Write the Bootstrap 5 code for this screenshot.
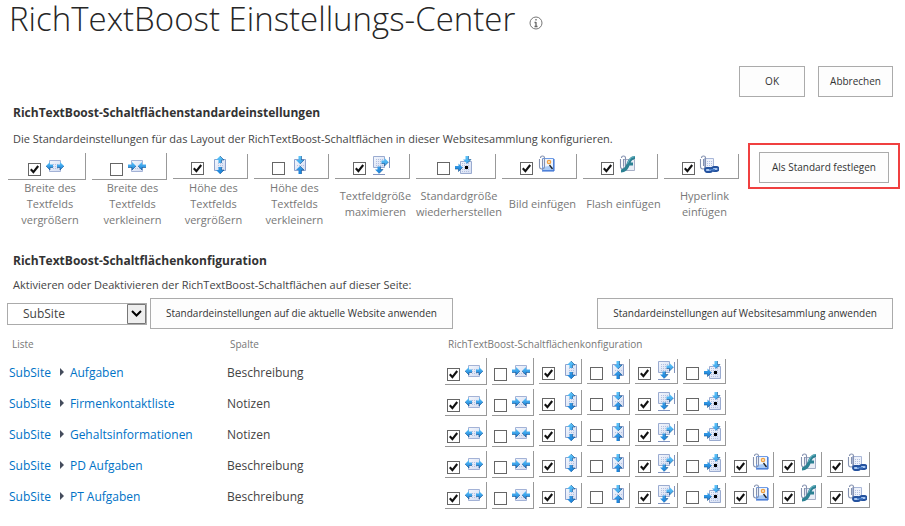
<!DOCTYPE html>
<html lang="de">
<head>
<meta charset="utf-8">
<meta name="viewport" content="width=device-width, initial-scale=1">
<title>RichTextBoost Einstellungs-Center</title>
<link href="https://cdn.jsdelivr.net/npm/bootstrap@5.3.0/dist/css/bootstrap.min.css" rel="stylesheet">
<style>
  body { font-family: "Open Sans", "Noto Sans", sans-serif; font-size: 12px; line-height: 16px; color: #444; background: #fff; }
  .page-title { font-size: 33px; font-weight: 300; line-height: 38px; color: #262626; }
  .page-head { gap: 14px; padding-left: 9px; }
  .section-title { font-size: 12px; font-weight: 700; line-height: 18px; color: #333; }
  .intro { font-size: 11px; }
  .section-title, .intro { padding-left: 13px; }
  .actions { gap: 13px; padding: 28px 12px 0 0; }
  .standard { padding-top: 7px; }
  .standard .intro { padding-top: 9px; }
  .config { padding-top: 24px; }
  .config .intro { padding-top: 7px; }
  .apply-line { padding: 5px 12px 0 7px; gap: 3px; }

  .sp-btn { --bs-btn-font-size: 10px; --bs-btn-line-height: 15px; --bs-btn-padding-x: 11px; --bs-btn-padding-y: 7px;
    --bs-btn-border-radius: 0; --bs-btn-color: #333; --bs-btn-bg: #fdfdfd; --bs-btn-border-color: #ababab;
    --bs-btn-hover-bg: #e6f2fa; --bs-btn-hover-border-color: #92c0e0; --bs-btn-hover-color: #444; white-space: nowrap; }
  .btn-ok { min-width: 66px; }
  .apply-line .sp-btn { --bs-btn-padding-x: 15px; }
  .marked { border: 2px solid #f04040; padding: 7px 9px 4px; margin-top: -10px; }
  .marked .sp-btn { --bs-btn-padding-x: 12px; }

  .preset-line { padding: 6px 5px 0 8px; gap: 3px; }
  .preset-grid { display: grid; grid-template-columns: 84fr repeat(4, 81fr) 86fr repeat(3, 81fr); }
  .preset-item { display: grid; grid-template-rows: 27px 48px; align-items: center; font-size: 11px; color: #777; }
  .preset-item > .tgl { margin-right: 6px; }
  .tgl { display: flex; align-items: flex-end; justify-content: center; gap: 4px; height: 25px; padding: 0 3px 3px 3px;
    border-right: 1px solid #999; border-bottom: 1px solid #999; }
  .tgl-wide { height: 27px; }
  .tgl input { appearance: none; flex: none; width: 13px; height: 13px; margin: 0; border: 1px solid #666; background: #fff; }
  .tgl input:checked { background: #fff url("data:image/svg+xml,%3Csvg xmlns='http://www.w3.org/2000/svg' viewBox='0 0 11 11'%3E%3Cpath d='M1.8 5.2L4.4 8.2L9.2 2' fill='none' stroke='%23111' stroke-width='2.1'/%3E%3C/svg%3E"); }
  .tgl svg { flex: none; width: 20px; height: 20px; }

  .site-select { appearance: none; width: 140px; height: 22px; padding: 0 24px 0 15px; border: 1px solid #ababab; border-radius: 0; color: #444;
    background: #fff url("data:image/svg+xml,%3Csvg xmlns='http://www.w3.org/2000/svg' width='19' height='20'%3E%3Cpath d='M.5 .5h18v19h-18z' fill='%23eee' stroke='%23777'/%3E%3Cpath d='M5 7l4.500 4.500L14 7' fill='none' stroke='%23000' stroke-width='2'/%3E%3C/svg%3E") no-repeat right center; }

  .list-table { table-layout: fixed; margin-left: 9px; width: calc(100% - 9px); }
  .list-table th { font-size: 10px; font-weight: 400; color: #777; height: 27px; padding: 2px 0 0 3px; }
  .list-table td { height: 31px; padding: 2px 0 0; }
  .list-table td:last-child { padding: 0; }
  .list-table a { color: #0072c6; text-decoration: none; }
  .list-table .arrow-sep { width: 4px; height: 8px; margin: 0 6px 2px 9px; }
  .col-list { width: 218px; }
  .tgl-row { gap: 5px; }
  .tgl-row .tgl { width: 43px; }
  .tgl-row .tgl-wide { width: 42px; }
</style>
<script src="https://cdn.jsdelivr.net/npm/bootstrap@5.3.0/dist/js/bootstrap.bundle.min.js"></script>
</head>
<body>
<svg class="position-absolute" width="0" height="0" aria-hidden="true">
  <defs>
    <linearGradient id="gBlue" x1="0" y1="0" x2="0" y2="1"><stop offset="0" stop-color="#5cc4fa"/><stop offset="1" stop-color="#1a80d8"/></linearGradient>
    <linearGradient id="gPage" x1="0" y1="0" x2="1" y2="1"><stop offset="0" stop-color="#f4f7fd"/><stop offset="1" stop-color="#d3dcf1"/></linearGradient>
    <pattern id="dots" width="2" height="2" patternUnits="userSpaceOnUse"><rect width="1" height="1" fill="#b3c0e0"/></pattern>
  </defs>
  <symbol id="i-wider" viewBox="0 0 20 20">
    <path d="M4.500 4.500h11v11h-11z" fill="url(#gPage)" stroke="#a3b2d6"/><path d="M8 8h5v5H8z" fill="url(#dots)"/>
    <path d="M1 10l4-4v2.500h3v3H5V14zM19 10l-4-4v2.500h-3v3h3V14z" fill="url(#gBlue)"/><path d="M1 10l4 4v-2.500h3M19 10l-4 4v-2.500h-3" fill="none" stroke="#12508e" stroke-width=".6"/>
  </symbol>
  <symbol id="i-narrower" viewBox="0 0 20 20">
    <path d="M4.500 4.500h11v11h-11z" fill="url(#gPage)" stroke="#a3b2d6"/><path d="M6 12h9v2H6z" fill="url(#dots)"/>
    <path d="M9 10L5 6v2.500H1v3h4V14zM11 10l4-4v2.500h4v3h-4V14z" fill="url(#gBlue)"/><path d="M1 11.500h4V14l4-4M19 11.500h-4V14l-4-4" fill="none" stroke="#12508e" stroke-width=".6"/>
  </symbol>
  <symbol id="i-taller" viewBox="0 0 20 20">
    <path d="M6.500 4.500h11v11h-11z" fill="url(#gPage)" stroke="#8fa2cc"/><path d="M9 8h6v5H9z" fill="url(#dots)"/>
    <path d="M12 1l4 4h-2.500v3h-3V5H8zM12 19l4-4h-2.500v-3h-3v3H8z" fill="url(#gBlue)"/><path d="M12 1l4 4h-2.500v3M12 19l4-4h-2.500v-3" fill="none" stroke="#12508e" stroke-width=".6"/>
  </symbol>
  <symbol id="i-shorter" viewBox="0 0 20 20">
    <path d="M5.500 4.500h11v11h-11z" fill="url(#gPage)" stroke="#8fa2cc"/><path d="M7 9h8v3H7z" fill="url(#dots)"/>
    <path d="M11 9l4-4h-2.500V1h-3v4H7zM11 11l4 4h-2.500v4h-3v-4H7z" fill="url(#gBlue)"/><path d="M11 9l4-4h-2.500V1M11 11l4 4h-2.500v4" fill="none" stroke="#12508e" stroke-width=".6"/>
  </symbol>
  <symbol id="i-max" viewBox="0 0 20 20">
    <path d="M3.500 1.500h11v11h-11z" fill="url(#gPage)" stroke="#9aabd0"/><path d="M6 4h7v7H6z" fill="url(#dots)"/>
    <path d="M19.500 2v11M3 19.500h12" stroke="#8193bd"/>
    <path d="M18.500 7l-4-4v2.500h-3v3h3V11zM9 18.500l4-4h-2.500v-3h-3v3H5z" fill="url(#gBlue)"/><path d="M11.500 8.500h3V11l4-4M9 18.500l4-4h-2.500v-3" fill="none" stroke="#12508e" stroke-width=".6"/>
  </symbol>
  <symbol id="i-reset" viewBox="0 0 20 20">
    <path d="M6.500 6.500h11v12h-11z" fill="url(#gPage)" stroke="#9aabd0"/><path d="M8 8h8v9H8z" fill="url(#dots)"/><path d="M11 11h3v3h-3z" fill="#000"/>
    <path d="M8.500 12.500l-4-4V11H1v3h3.500v2.500zM13 8.500l4-4h-2.500V1h-3v3.500H9z" fill="url(#gBlue)"/><path d="M1 14h3.500v2.500l4-4M13 8.500l4-4h-2.500V1" fill="none" stroke="#12508e" stroke-width=".6"/>
  </symbol>
  <symbol id="i-clip" viewBox="0 0 20 20">
    <path d="M2.500 4v7.500a2.500 2.500 0 0 0 5 0V3a2 2 0 0 0-4 0M5.500 4v7" fill="none" stroke="#8592b0" stroke-width="1.100"/>
  </symbol>
  <symbol id="i-image" viewBox="0 0 20 20">
    <path d="M5.500 3.500h11v12h-11z" fill="#eef5fe" stroke="#6f9ce6"/><path d="M6 15h10v-3l-4-1-6 1z" fill="#a9cbf7"/>
    <circle cx="12" cy="7" r="1.700" fill="#fbe6c0" stroke="#f2a142" stroke-width="1.200"/><path d="M12.500 10l3 4" stroke="#222" stroke-width="1.300"/><path d="M5 16h12V4" fill="none" stroke="#2c66cf"/>
    <use href="#i-clip" width="20" height="20"/>
  </symbol>
  <symbol id="i-flash" viewBox="0 0 20 20">
    <path d="M5.500 4.500h11v11h-11z" fill="#e9edf6" stroke="#a6afc6"/>
    <use href="#i-clip" width="20" height="20"/>
    <path d="M17 1v3c-2.500.3-3.600 1.700-4.300 3.500H15v3h-3.500C10 14.500 7.500 17.500 3 17.500v-3c3-.5 4.500-3 5.700-6C10.300 4.300 12.500 1 17 1z" fill="#2c8193"/><path d="M16.500 1.600c-4 .5-5.500 3.400-7 7" stroke="#69b7c5" fill="none"/>
  </symbol>
  <symbol id="i-link" viewBox="0 0 20 20">
    <path d="M5.500 3.500h9v12h-9z" fill="#eef2fb" stroke="#a9b7d8"/><path d="M8 6h5v6H8z" fill="url(#dots)"/>
    <use href="#i-clip" x="-1" width="20" height="20"/>
    <path d="M8 13h3a2 2 0 0 1 0 4H8a2 2 0 0 1 0-4zM15 12h2.500a2 2 0 0 1 0 4H15a2 2 0 0 1 0-4z" fill="#a9c8f2" stroke="#24529f" stroke-width="1.800"/>
    <path d="M10 14.700h6" stroke="#4a80cc" stroke-width="1.500"/>
  </symbol>
</svg>

<main class="container-fluid p-0">
  <header class="page-head d-flex align-items-center">
    <h1 class="page-title mb-0">RichTextBoost Einstellungs-Center</h1>
    <svg class="mt-2" width="14" height="14" viewBox="0 0 14 14" role="img" aria-label="Info"><circle cx="7" cy="7" r="6" fill="none" stroke="#777"/><path d="M7 3v1.500M7 6v5M5.500 6.500H7M5.500 10.500h3" stroke="#666" stroke-width="1.300"/></svg>
  </header>

  <form>
    <div class="actions d-flex justify-content-end">
      <button type="button" class="btn sp-btn btn-ok">OK</button>
      <button type="button" class="btn sp-btn">Abbrechen</button>
    </div>

    <section class="standard">
      <h2 class="section-title mb-0">RichTextBoost-Schaltflächenstandardeinstellungen</h2>
      <p class="intro mb-0">Die Standardeinstellungen für das Layout der RichTextBoost-Schaltflächen in dieser Websitesammlung konfigurieren.</p>
      <div class="d-flex align-items-start preset-line">
        <div class="preset-grid flex-grow-1" id="presets"></div>
        <div class="marked"><button type="button" class="btn sp-btn">Als Standard festlegen</button></div>
      </div>
    </section>

    <section class="config">
      <h2 class="section-title mb-0">RichTextBoost-Schaltflächenkonfiguration</h2>
      <label class="intro d-block" for="site">Aktivieren oder Deaktivieren der RichTextBoost-Schaltflächen auf dieser Seite:</label>
      <div class="apply-line d-flex align-items-center">
        <select class="site-select" id="site"><option>SubSite</option></select>
        <button type="button" class="btn sp-btn">Standardeinstellungen auf die aktuelle Website anwenden</button>
        <button type="button" class="btn sp-btn ms-auto">Standardeinstellungen auf Websitesammlung anwenden</button>
      </div>
      <table class="list-table">
        <colgroup><col class="col-list"><col class="col-list"><col></colgroup>
        <thead><tr><th scope="col">Liste</th><th scope="col">Spalte</th><th scope="col">RichTextBoost-Schaltflächenkonfiguration</th></tr></thead>
        <tbody id="lists"></tbody>
      </table>
    </section>
  </form>
</main>
<script>
  const tools = [
    ["wider", "Breite des Textfelds vergrößern", true],
    ["narrower", "Breite des Textfelds verkleinern", false],
    ["taller", "Höhe des Textfelds vergrößern", true],
    ["shorter", "Höhe des Textfelds verkleinern", false],
    ["max", "Textfeldgröße maximieren", true],
    ["reset", "Standardgröße wiederherstellen", false],
    ["image", "Bild einfügen", true],
    ["flash", "Flash einfügen", true],
    ["link", "Hyperlink einfügen", true]
  ];
  const toggle = ([icon, label, on], i, id) =>
    `<label class="tgl${i < 2 ? " tgl-wide" : ""}" for="${id}"><input type="checkbox" id="${id}" aria-label="${label}"${on ? " checked" : ""}><svg aria-hidden="true"><use href="#i-${icon}"/></svg></label>`;
  document.getElementById("presets").innerHTML = tools.map((t, i) =>
    `<div class="preset-item">${toggle(t, i, "std-" + t[0])}<label class="text-center" for="std-${t[0]}">${t[1]}</label></div>`).join("");
  const lists = [["Aufgaben", "Beschreibung", 6], ["Firmenkontaktliste", "Notizen", 6], ["Gehaltsinformationen", "Notizen", 6],
    ["PD Aufgaben", "Beschreibung", 9], ["PT Aufgaben", "Beschreibung", 9]];
  document.getElementById("lists").innerHTML = lists.map(([name, field, n], r) =>
    `<tr><td><a href="#">SubSite</a><svg class="arrow-sep" viewBox="0 0 4 8" aria-hidden="true"><path d="M0 0l4 4-4 4z" fill="#444c5c"/></svg><a href="#">${name}</a></td><td>${field}</td><td><div class="tgl-row d-flex align-items-center">${tools.slice(0, n).map((t, i) => toggle(t, i, `l${r}-${t[0]}`)).join("")}</div></td></tr>`).join("");
</script>
</body>
</html>
